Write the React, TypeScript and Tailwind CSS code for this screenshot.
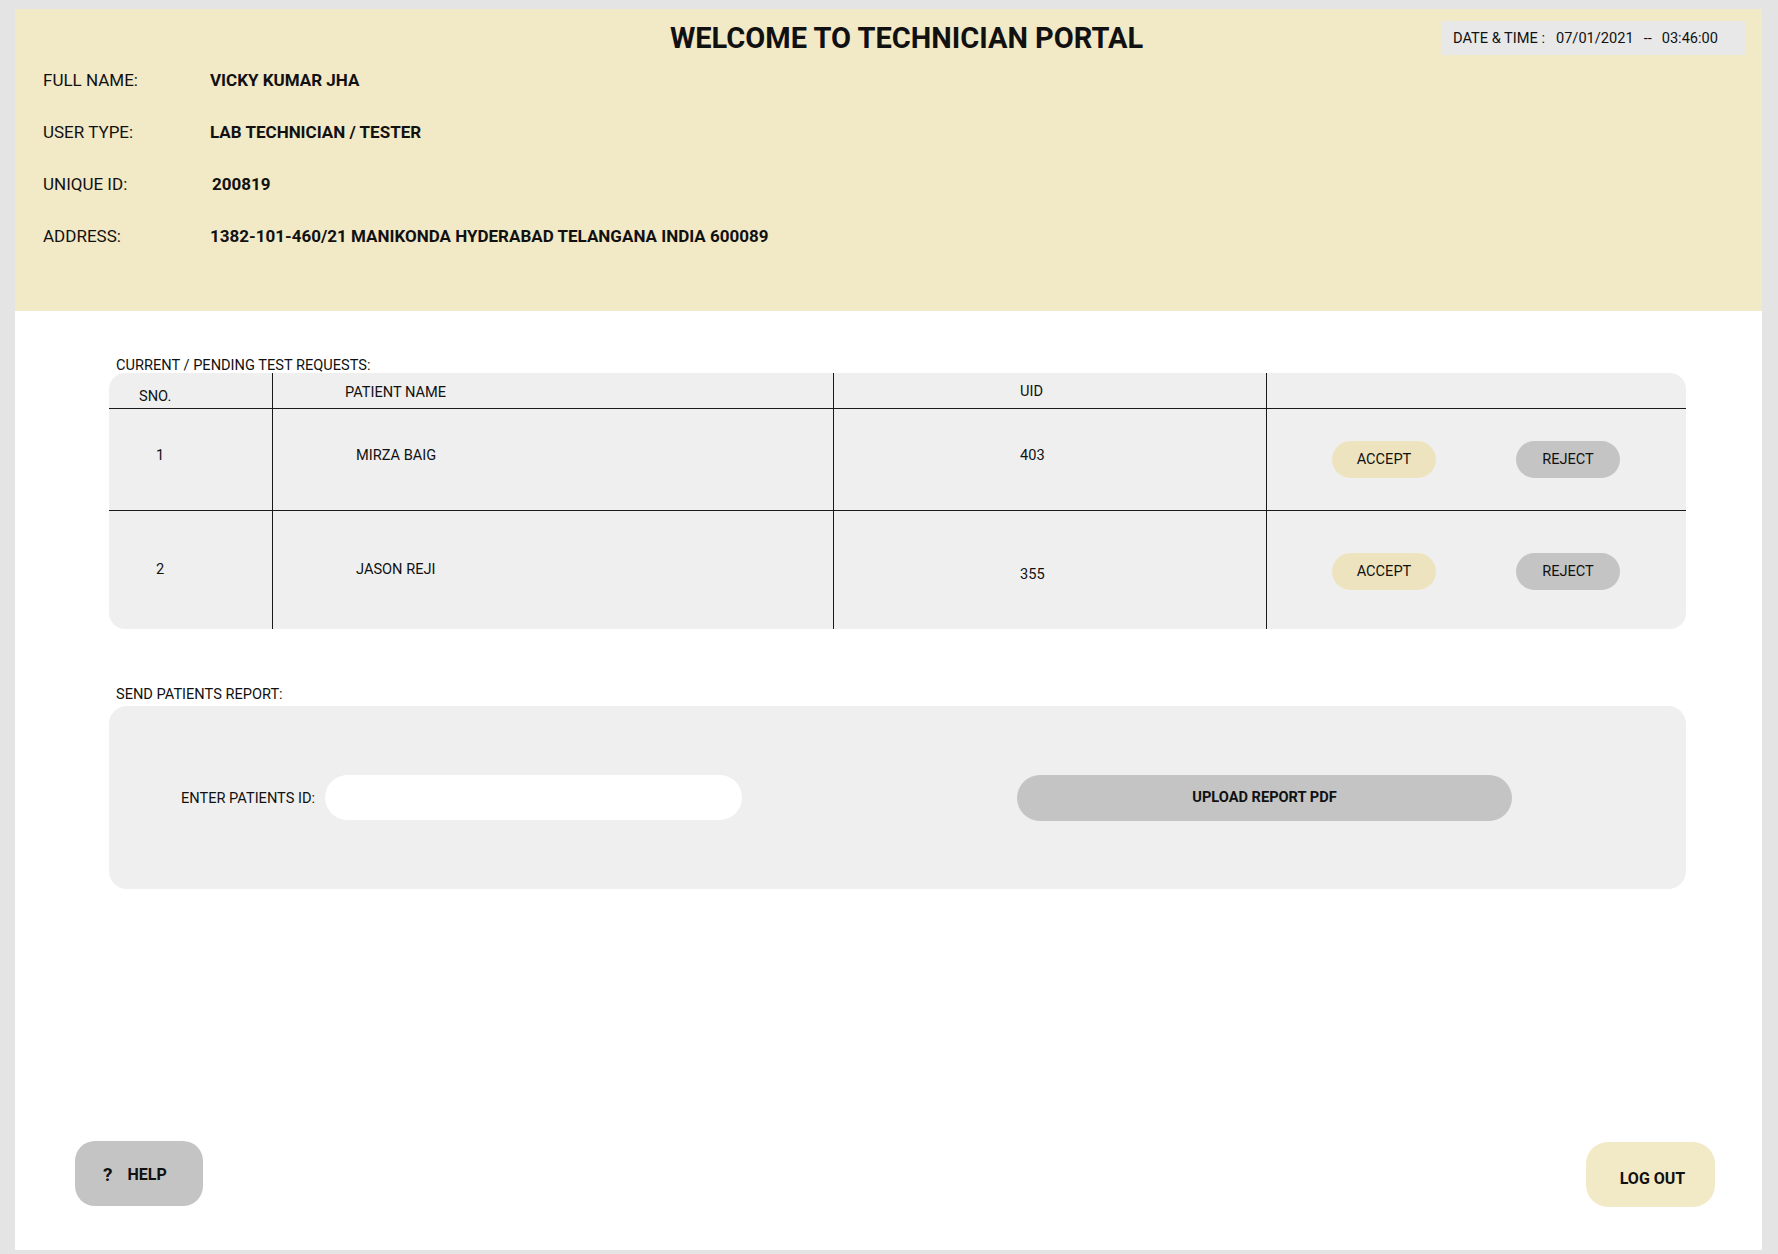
import React from "react";

const rows = [
  { sno: "1", name: "MIRZA BAIG", uid: "403", h: "h-[102px]", pt: "pt-[36px]", bt: "pt-[32px]", border: true },
  { sno: "2", name: "JASON REJI", uid: "355", h: "h-[118px]", pt: "pt-[48px]", bt: "pt-[42px]", border: false },
];

function InfoRow({ label, value, shift }: { label: string; value: string; shift?: boolean }) {
  return (
    <div className="flex h-[52px] items-center text-[17px]">
      <span className="w-[167px]">{label}</span>
      <span className={`font-bold ${shift ? "ml-[2px]" : ""}`}>{value}</span>
    </div>
  );
}

export default function App() {
  return (
    <div
      className="min-h-screen bg-[#e4e4e4] pl-[15px] pr-[16px] pt-[9px] pb-[4px] text-[#111]"
      style={{ fontFamily: "Roboto, 'Liberation Sans', sans-serif" }}
    >
      <div className="flex h-[1241px] flex-col bg-white">
        {/* header */}
        <div className="h-[302px] bg-[#f2e9c6] pl-[28px] pr-[17px]">
          <div className="flex items-center pt-[12px]">
            <div className="flex-1" />
            <h1 className="ml-[25px] text-[29px] font-bold leading-[34px]">WELCOME TO TECHNICIAN PORTAL</h1>
            <div className="flex flex-1 justify-end">
              <div className="flex h-[34px] w-[303px] items-center bg-[#e8e8e8] pl-[11px] pt-[2px] text-[14.6px]">
                <span>DATE &amp; TIME :</span>
                <span className="ml-[11px]">07/01/2021</span>
                <span className="ml-[10px]">--</span>
                <span className="ml-[10px]">03:46:00</span>
              </div>
            </div>
          </div>
          <div>
            <InfoRow label="FULL NAME:" value="VICKY KUMAR JHA" />
            <InfoRow label="USER TYPE:" value="LAB TECHNICIAN / TESTER" />
            <InfoRow label="UNIQUE ID:" value="200819" shift />
            <InfoRow label="ADDRESS:" value="1382-101-460/21 MANIKONDA HYDERABAD TELANGANA INDIA 600089" />
          </div>
        </div>

        {/* requests */}
        <div className="pl-[94px] pr-[76px]">
          <p className="mt-[46px] pl-[7px] text-[14.6px] leading-[16px]">CURRENT / PENDING TEST REQUESTS:</p>
          <div className="overflow-hidden rounded-[16px] bg-[#efefef] text-[14.6px]">
            <div className="grid h-[36px] grid-cols-[163px_561px_433px_1fr] border-b-[1.5px] border-[#1a1a1a]">
              <div className="pl-[30px] pt-[13px]">SNO.</div>
              <div className="border-l-[1.5px] border-[#1a1a1a] pl-[72px] pt-[9px]">PATIENT NAME</div>
              <div className="border-l-[1.5px] border-[#1a1a1a] pl-[186px] pt-[8px]">UID</div>
              <div className="border-l-[1.5px] border-[#1a1a1a]" />
            </div>
            {rows.map((r) => (
              <div
                key={r.sno}
                className={`grid ${r.h} grid-cols-[163px_561px_433px_1fr] ${r.border ? "border-b-[1.5px] border-[#1a1a1a]" : ""}`}
              >
                <div className={`pl-[47px] ${r.pt}`}>{r.sno}</div>
                <div className={`border-l-[1.5px] border-[#1a1a1a] pl-[83px] ${r.pt}`}>{r.name}</div>
                <div className={`border-l-[1.5px] border-[#1a1a1a] pl-[186px] ${r.border ? r.pt : "pt-[53px]"}`}>{r.uid}</div>
                <div className={`flex border-l-[1.5px] border-[#1a1a1a] pl-[65px] ${r.bt}`}>
                  <button className="h-[37px] w-[104px] rounded-full bg-[#ede4bf]">ACCEPT</button>
                  <button className="ml-[80px] h-[37px] w-[104px] rounded-full bg-[#c4c4c4]">REJECT</button>
                </div>
              </div>
            ))}
          </div>

          {/* send report */}
          <p className="mt-[57px] pl-[7px] text-[14.6px] leading-[16px]">SEND PATIENTS REPORT:</p>
          <div className="mt-[4px] flex h-[183px] items-center rounded-[18px] bg-[#efefef] pl-[72px]">
            <span className="mt-[2px] w-[144px] text-[14.6px]">ENTER PATIENTS ID:</span>
            <input className="h-[45px] w-[417px] rounded-full bg-white px-4 outline-none" />
            <button className="ml-[275px] h-[46px] w-[495px] rounded-full bg-[#c4c4c4] text-[14.6px] font-bold">
              UPLOAD REPORT PDF
            </button>
          </div>
        </div>

        {/* footer */}
        <div className="mt-auto flex items-end justify-between pb-[43px] pl-[60px] pr-[47px]">
          <button className="mb-[1px] flex h-[65px] w-[128px] items-center rounded-[20px] bg-[#c4c4c4] pl-[28px] pt-[3px] text-[16px] font-bold">
            <span className="text-[19px]">?</span>
            <span className="ml-[15px]">HELP</span>
          </button>
          <button className="h-[65px] w-[129px] rounded-[22px] bg-[#f2e9c6] pl-[4px] pt-[8px] text-[16px] font-bold">LOG OUT</button>
        </div>
      </div>
    </div>
  );
}
